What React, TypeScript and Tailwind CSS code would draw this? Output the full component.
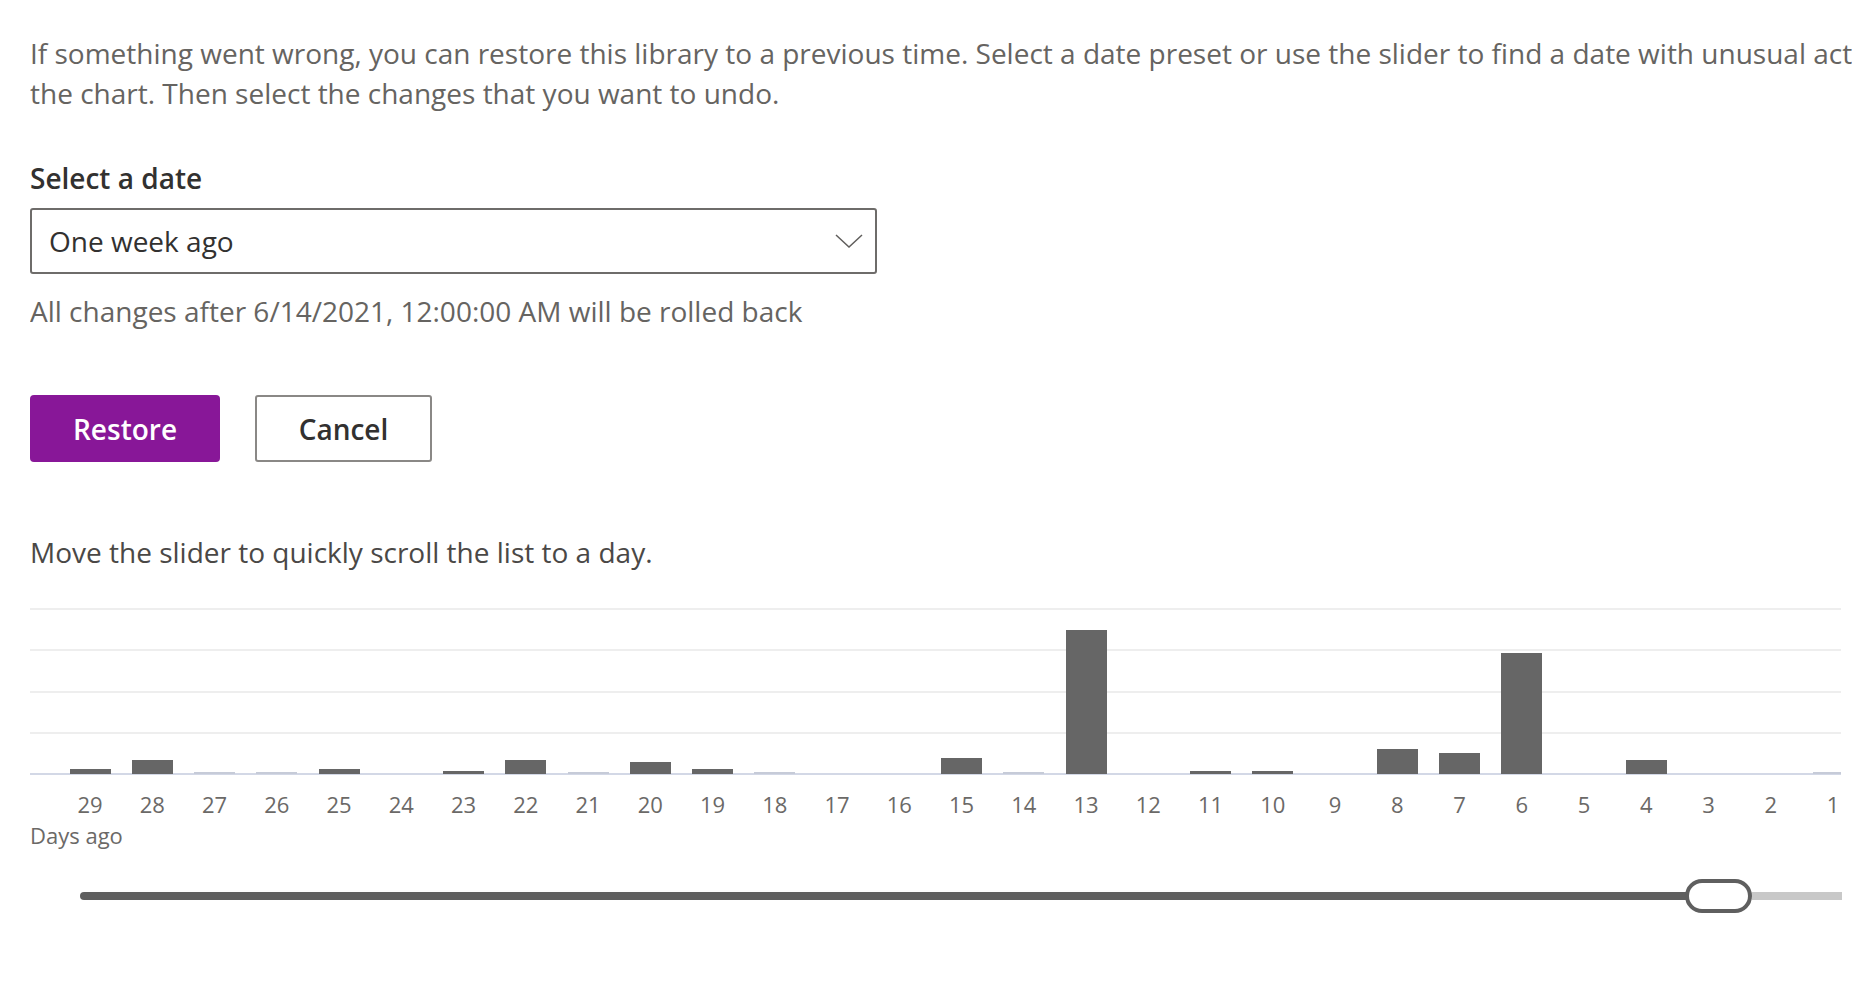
import React from 'react'

// days ago -> bar height in px; -1 marks a zero day drawn as a faint stub
const BARS: [number, number][] = [
  [29, 5], [28, 14], [27, -1], [26, -1], [25, 5], [24, 0], [23, 3], [22, 14],
  [21, -1], [20, 12], [19, 5], [18, -1], [17, 0], [16, 0], [15, 16], [14, -1],
  [13, 144], [12, 0], [11, 3], [10, 3], [9, 0], [8, 25], [7, 21], [6, 121],
  [5, 0], [4, 14], [3, 0], [2, 0], [1, -1],
]

function Chevron() {
  return (
    <svg width="28" height="14" viewBox="0 0 28 14" fill="none">
      <polyline points="1,1 14,13 27,1" stroke="#605e5c" strokeWidth="1.5" />
    </svg>
  )
}

function ActivityChart() {
  return (
    <div className="mt-[36px]">
      <div className="relative h-[167px] w-[1811px] overflow-hidden">
        {/* grid lines */}
        <div className="absolute inset-0 flex flex-col justify-between">
          <div className="h-[2px] bg-[#eeeeee]" />
          <div className="h-[2px] bg-[#eeeeee]" />
          <div className="h-[2px] bg-[#eeeeee]" />
          <div className="h-[2px] bg-[#eeeeee]" />
          <div className="h-[2px] bg-[#d3d8e6]" />
        </div>
        <div className="relative flex h-full items-end pb-[1px] pl-[29px]">
          {BARS.map(([day, h]) => (
            <div key={day} className="flex w-[62.25px] shrink-0 justify-center">
              {h > 0 && <div className="w-[41px] bg-[#666666]" style={{ height: h }} />}
              {h < 0 && <div className="h-[2px] w-[41px] bg-[#c6cbd8]" />}
            </div>
          ))}
        </div>
      </div>
      <div className="mt-[14px] flex pl-[29px]">
        {BARS.map(([day]) => (
          <div key={day} className="w-[62.25px] shrink-0 text-center text-[22px] leading-[30px] text-[#6b6967]">
            {day}
          </div>
        ))}
      </div>
      <div className="mt-[1px] text-[22px] leading-[30px] text-[#6b6967]">Days ago</div>
    </div>
  )
}

function DaySlider() {
  return (
    <div className="ml-[50px] mt-[29px] flex h-[34px] items-center">
      <div className="h-[8px] w-[1608px] shrink-0 rounded-l-full bg-[#5f5f5f]" />
      <div className="-ml-[3px] h-[34px] w-[67px] shrink-0 rounded-full border-4 border-[#5f5f5f] bg-white" />
      <div className="h-[8px] w-[90px] shrink-0 bg-[#c8c8c8]" />
    </div>
  )
}

export default function App() {
  return (
    <div className="h-[996px] w-[1876px] overflow-hidden bg-white pl-[30px] font-['Open_Sans',sans-serif] text-[28px]">
      <div className="w-[1822px] overflow-hidden">
        <p className="whitespace-nowrap pt-[33px] leading-[40px] text-[#666461]">
          If something went wrong, you can restore this library to a previous time. Select a date preset or use the slider to find a date with unusual activity in
          <br />
          the chart. Then select the changes that you want to undo.
        </p>

        <div className="mt-[45px] font-semibold leading-[40px] text-[#323130]">Select a date</div>

        <div className="mt-[10px] flex h-[66px] w-[847px] items-center justify-between rounded-[3px] border-2 border-[#6e6c6a] pl-[17px] pr-[12px]">
          <span className="leading-[40px] text-[#323130]">One week ago</span>
          <Chevron />
        </div>

        <div className="mt-[17px] leading-[40px] text-[#666461]">All changes after 6/14/2021, 12:00:00 AM will be rolled back</div>

        <div className="mt-[64px] flex gap-[35px]">
          <button type="button" className="h-[67px] w-[190px] rounded-[4px] bg-[#881798] font-semibold text-white">
            Restore
          </button>
          <button type="button" className="h-[67px] w-[177px] rounded-[3px] border-2 border-[#8a8886] bg-white font-semibold text-[#323130]">
            Cancel
          </button>
        </div>

        <div className="mt-[70px] leading-[40px] text-[#4a4846]">Move the slider to quickly scroll the list to a day.</div>

        <ActivityChart />
        <DaySlider />
      </div>
    </div>
  )
}
